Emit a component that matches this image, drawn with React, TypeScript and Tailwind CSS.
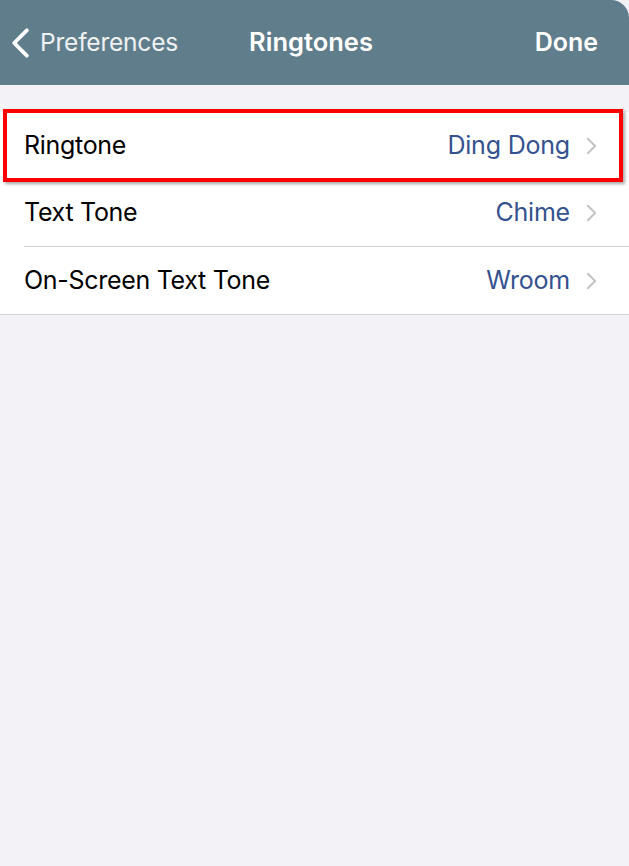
const rows = [
  { label: "Ringtone", value: "Ding Dong", selected: true },
  { label: "Text Tone", value: "Chime" },
  { label: "On-Screen Text Tone", value: "Wroom" },
];

function Chevron({ className, dir = "right" }: { className?: string; dir?: "left" | "right" }) {
  // iOS-style disclosure chevron
  return (
    <svg viewBox="0 0 12 20" className={className} fill="none" stroke="currentColor" strokeLinecap="round" strokeLinejoin="round">
      {dir === "right" ? <polyline points="2,2 10,10 2,18" /> : <polyline points="10,2 2,10 10,18" />}
    </svg>
  );
}

export default function App() {
  return (
    <div
      className="min-h-[866px] w-full bg-[#f2f2f7]"
      style={{ fontFamily: "Inter, 'Noto Sans', sans-serif" }}
    >
      <header className="relative flex h-[85px] items-center rounded-tr-[18px] bg-[#607d8b] pl-[11px] text-white">
        <div className="flex items-center gap-[10px]">
          <Chevron dir="left" className="mt-[1px] h-[32px] w-[19px] stroke-[2.4]" />
          <span className="text-[24.5px] tracking-[-0.2px] text-white/90">Preferences</span>
        </div>
        <span className="absolute left-[311px] -translate-x-1/2 text-[25.5px] font-semibold">Ringtones</span>
        <span className="ml-auto pr-[31px] text-[25px] font-semibold">Done</span>
      </header>

      <div className="mt-[27px] border-b border-[#d1d1d6] bg-white">
        {rows.map((row, i) => (
          <div key={row.label} className="relative">
            <div className="flex h-[67px] items-center pl-6 pr-[32px]">
              <span className="text-[25px] tracking-[-0.3px] text-black">{row.label}</span>
              <span className="ml-auto text-[25px] tracking-[-0.2px] text-[#34528f]">{row.value}</span>
              <Chevron className="ml-[16px] h-[18px] w-[11px] text-[#c4c4c9] stroke-[2.3]" />
            </div>
            {i > 0 && i < rows.length - 1 && (
              <div className="ml-6 h-px bg-[#d1d1d6]" />
            )}
            {row.selected && (
              <div className="pointer-events-none absolute left-[3px] right-[6px] -top-[3px] -bottom-[3px] border-4 border-[#ff0000] shadow-[2px_2px_3px_rgba(0,0,0,0.35)]" />
            )}
          </div>
        ))}
      </div>
    </div>
  );
}
